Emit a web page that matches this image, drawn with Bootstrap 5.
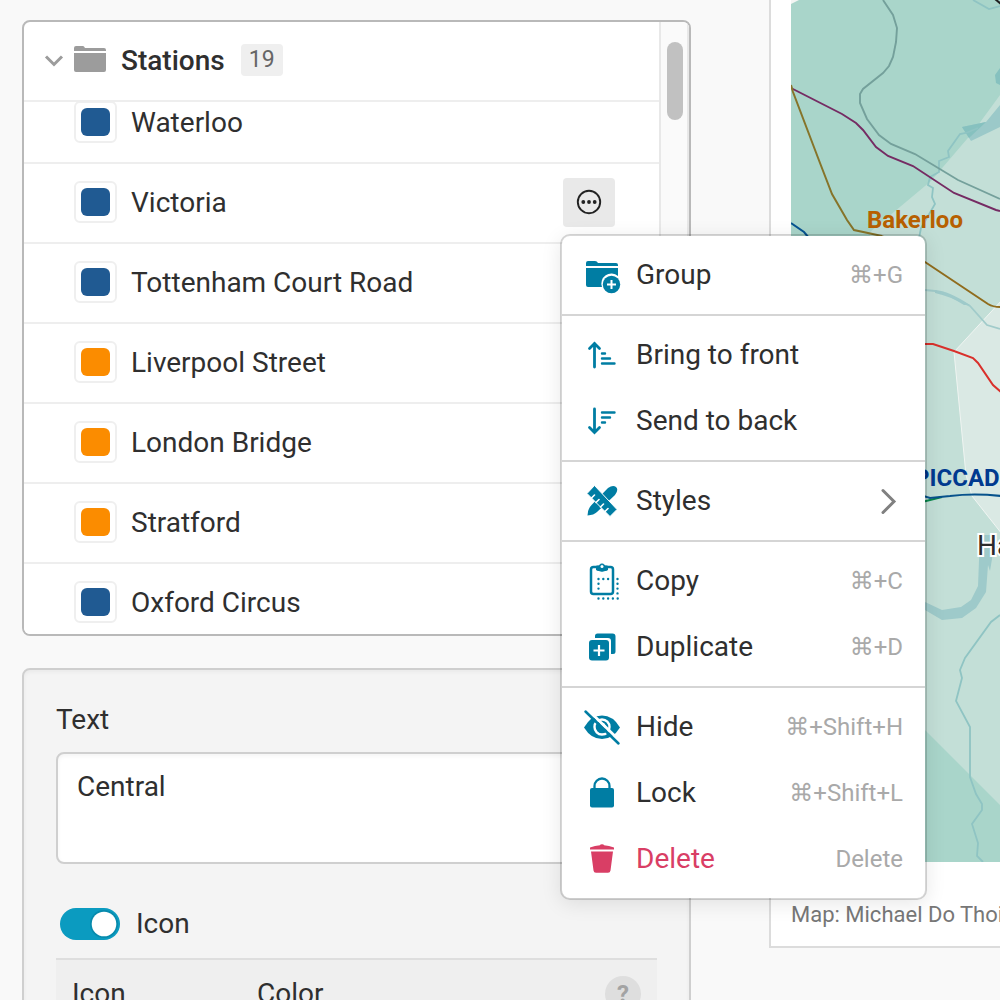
<!DOCTYPE html>
<html lang="en">
<head>
<meta charset="utf-8">
<meta name="viewport" content="width=device-width, initial-scale=1">
<title>Stations map editor</title>
<link href="https://cdn.jsdelivr.net/npm/bootstrap@5.3.0/dist/css/bootstrap.min.css" rel="stylesheet">
<style>
body{font-family:Roboto,"DejaVu Sans",sans-serif;font-size:28px;line-height:36px;color:#2f2f2f;background:#f9f9f9}
.editor{height:100vh;overflow:hidden}
.side{flex:0 0 691px;padding:20px 0 0 22px;gap:32px}
.panel{border:2px solid #b9b9b9;border-radius:8px;overflow:hidden;flex-shrink:0}
.layers{background:#fff;height:616px}
.layers-head{height:80px;border-bottom:2px solid #eee;padding:0 20px;flex-shrink:0}
.layers-head svg{flex-shrink:0}
.layers-title{font-weight:500;margin-left:13px}
.count{background:#efefef;color:#666;font-size:23px;font-weight:400;line-height:28px;padding:2px 8px;border-radius:4px;margin:0 0 2px 16px}
.layers-view{overflow:hidden;flex:1}
.layers-view ul{margin-top:-18px}
.layers .station{height:80px;border:0;border-bottom:2px solid #eee;border-radius:0;padding:0 44px 0 50px;color:inherit;background:#fff}
.swatch{width:43px;height:42px;border:2px solid #efefef;border-radius:6px;margin:0 14px 2px 0}
.swatch i{width:29px;height:28px;border-radius:6px;background:#205a92}
.swatch.orange i{background:#fb8c00}
.more{width:52px;height:49px;margin-bottom:2px;border-radius:4px;background:#e9e9e9;color:#222}
.track{width:30px;background:#fafafa;border-left:2px solid #e8e8e8;border-right:2px solid #e8e8e8;padding:20px 0 0 2px}
.thumb{width:16px;height:78px;border-radius:8px;background:#c1c1c1}
.props{background:#f4f4f4;border-color:#cfcfcf;padding:32px 32px 80px;box-shadow:inset 0 2px 4px #0000000c}
.props .form-label{margin:0 0 14px}
.props textarea{font-size:28px;line-height:36px;height:112px;padding:15px 19px;border:2px solid #cfcfcf;border-radius:8px;color:#2f2f2f;resize:none;box-shadow:inset 0 2px 4px #0000000c}
.switch-row{min-height:0;margin:42px 0 16px;padding:0 4px;gap:16px}
.switch-row .form-check-input{width:60px;height:32px;margin:0;border:0;float:none;background-size:32px 32px;background-color:#0b9bc0}
.switch-row .form-check-input:checked{background-color:#0b9bc0;background-image:url("data:image/svg+xml,%3csvg xmlns='http://www.w3.org/2000/svg' viewBox='0 0 32 32'%3e%3ccircle cx='16' cy='16' r='14' fill='%23078aac'/%3e%3ccircle cx='16' cy='16' r='12.3' fill='%23fff'/%3e%3c/svg%3e")}
.switch-row label{line-height:36px}
.icon-options{background:#efefef;border-top:2px solid #dedede;padding:16px}
.icon-options .col-icon{width:185px}
.help{width:36px;height:36px;border-radius:50%;background:#dedede;color:#a3a3a3;font-size:24px;font-weight:700;line-height:36px}
.map-card{margin:-2px -2px 0 78px;border:2px solid #dcdcdc;background:#fff;padding-left:20px;align-self:flex-start;flex:1;min-width:0}
.map-card svg{height:862px;width:100%;display:block}
.map-card p{font-size:22px;line-height:28px;color:#777;margin:0;padding:39px 0 17px;white-space:nowrap;overflow:hidden}
.ctx{left:560px;top:234px;width:367px;padding:0;border:2px solid #00000028;background-clip:padding-box;border-radius:10px;font-size:28px;color:#2f2f2f;box-shadow:0 4px 20px #00000018}
.ctx .menu-section{padding:6px 0;border-bottom:2px solid #d5d5d5}
.ctx .menu-section:last-child{border:0}
.ctx .dropdown-item{height:66px;padding:0 22px 0 20px;color:inherit;line-height:36px}
.ctx .dropdown-item svg{width:40px;height:40px;margin-right:14px;color:#007da3;flex-shrink:0}
.ctx .dropdown-item kbd{font:inherit;font-size:24px;color:#a9a9a9;background:none;padding:0;margin-left:auto}
.ctx .dropdown-item .chev{color:#808080;margin:0 -6px 0 auto}
.ctx .danger,.ctx .danger svg{color:#d93e65}
</style>
<script src="https://cdn.jsdelivr.net/npm/bootstrap@5.3.0/dist/js/bootstrap.bundle.min.js"></script>
</head>
<body>
<main class="editor d-flex position-relative">
<aside class="side d-flex flex-column">
  <section class="panel layers d-flex">
    <div class="d-flex flex-column flex-grow-1">
      <header class="layers-head d-flex align-items-center">
        <svg width="20" height="20" viewBox="0 0 20 20" fill="none" stroke="#9c9c9c" stroke-width="3"><path d="M2 5.500l8 8 8-8"/></svg>
        <svg class="ms-2" width="36" height="32" viewBox="0 0 36 32" fill="#9c9c9c"><path d="M2 6V3q0-2 2-2h7q1 0 2 2h19q2 0 2 2v1zM2 8h32v17q0 2-2 2H4q-2 0-2-2z"/></svg>
        <span class="layers-title">Stations</span><span class="count">19</span>
      </header>
      <div class="layers-view">
        <ul class="list-group">
          <li class="list-group-item station d-flex align-items-center"><span class="swatch d-flex align-items-center justify-content-center"><i></i></span>Waterloo</li>
          <li class="list-group-item station d-flex align-items-center"><span class="swatch d-flex align-items-center justify-content-center"><i></i></span>Victoria
            <button class="btn more ms-auto p-0 d-flex align-items-center justify-content-center" aria-label="More actions"><svg width="26" height="26" viewBox="0 0 26 26"><circle cx="13" cy="13" r="11.200" fill="none" stroke="currentColor" stroke-width="1.900"/><g fill="currentColor"><circle cx="7.300" cy="13" r="1.900"/><circle cx="13" cy="13" r="1.900"/><circle cx="18.700" cy="13" r="1.900"/></g></svg></button></li>
          <li class="list-group-item station d-flex align-items-center"><span class="swatch d-flex align-items-center justify-content-center"><i></i></span>Tottenham Court Road</li>
          <li class="list-group-item station d-flex align-items-center"><span class="swatch orange d-flex align-items-center justify-content-center"><i></i></span>Liverpool Street</li>
          <li class="list-group-item station d-flex align-items-center"><span class="swatch orange d-flex align-items-center justify-content-center"><i></i></span>London Bridge</li>
          <li class="list-group-item station d-flex align-items-center"><span class="swatch orange d-flex align-items-center justify-content-center"><i></i></span>Stratford</li>
          <li class="list-group-item station d-flex align-items-center"><span class="swatch d-flex align-items-center justify-content-center"><i></i></span>Oxford Circus</li>
        </ul>
      </div>
    </div>
    <div class="track d-flex justify-content-center"><div class="thumb"></div></div>
  </section>
  <section class="panel props">
    <label class="form-label d-block" for="label-text">Text</label>
    <textarea class="form-control" id="label-text">Central</textarea>
    <div class="form-check form-switch switch-row d-flex align-items-center">
      <input class="form-check-input" type="checkbox" role="switch" id="icon-on" checked><label for="icon-on">Icon</label>
    </div>
    <div class="icon-options d-flex align-items-center">
      <span class="col-icon">Icon</span><span>Color</span><button class="btn help p-0 ms-auto border-0">?</button>
    </div>
  </section>
</aside>
<section class="map-card">
  <svg viewBox="791 0 209 862" preserveAspectRatio="xMinYMin slice" role="img" aria-label="Map of London stations" font-family="Roboto" fill="none">
    <path fill="#a9d5ca" d="M791 0h209v862H791z"/>
    <path fill="#f3f5f3" d="M791 0h8l-8 4z"/>
    <path fill="#c3dfd7" d="M1000 95l-27 37-42 49-61 51v443l55 55 75 75z"/>
    <path fill="#dae9e4" stroke="#f0f5f2" d="M1002 300l-48 52 12 123 6 21 30 38z"/>
    <path fill="#9bc9c9" d="M962 127l24-5 14-17v22l-29 14z"/>
    <path fill="#86c1bf" d="M962 127l24-5-17 16zM995 75l5-7v17l-4-2z"/>
    <g stroke="#8fc4c3" stroke-width="1.800">
      <path d="M973 0l16 9 11-3M978 128l-12 5-6 1-12 17 1 6-10 4v11l-9 5-2 8 5 3-1 9 3 7-14 24-2 10"/>
      <path d="M925 290l10 1 15 5 20 10 17 19 13 4" stroke="#a1cbca"/>
      <path d="M1000 615l-9 7-26 36-5 12 2 8-6 23 14 26v50l6 17 6 10v6l-10 14 6 19-1 13 6 6"/>
    </g>
    <path fill="#9ecaca" d="M935 290q14 1 35 15l-6 0q-14-9-29-12zM980 535h16l-6 36-2-6-2 27-10 16-14 10-20 2-17-10v-8l17 8 19-3 10-7 7-14z"/>
    <path stroke="#74a09b" stroke-width="1.900" d="M883 0l10 15 4 13-1 14-3 15-4 9-6 7-20 16-3 5v9l7 16 12 16 12 9 24 10 43 26 42 19"/>
    <path stroke="#752b63" stroke-width="1.900" d="M791 88l51 26 14 9 7 7 13 17 12 9 25 10 41 27 42 17 4 1"/>
    <path stroke="#86742a" stroke-width="2" d="M791 85l2 7 27 71 12 31 15 26 7 10 28 6"/>
    <path stroke="#906c1d" stroke-width="2" d="M882 236l43 26 36 24 27 18q5 3 12 3"/>
    <path stroke="#075391" stroke-width="2" d="M791 223l13 9 5 6"/>
    <path stroke="#202020" stroke-width="2" d="M995-1l6 5"/>
    <path stroke="#d9302b" stroke-width="2" d="M920 344h13l21 7 19 7 5 5 15 22 8 7"/>
    <path stroke="#07884b" stroke-width="2" d="M922 502l20-5"/>
    <path stroke="#07528c" stroke-width="2.200" d="M920 495l10 3 20-2q24-3 51 0"/>
    <text x="867" y="228" fill="#b76000" font-size="24" font-weight="700">Bakerloo</text>
    <text x="914" y="486" fill="#003a8f" font-size="24" font-weight="700">PICCADILLY</text>
    <text x="977" y="555" fill="#2c2c2c" stroke="#fff" stroke-width="4" paint-order="stroke" font-size="28">Hammersmith</text>
  </svg>
  <p>Map: Michael Do Thoi</p>
</section>

<div class="dropdown-menu show ctx">
  <div class="menu-section">
    <button class="dropdown-item d-flex align-items-center"><svg viewBox="0 0 40 40" fill="currentColor"><path d="M4 11V8q0-2 2-2h7q2 0 3 2h18q2 0 2 2v1zM4 13h32v8a10 10 0 0 0-16 11H6q-2 0-2-2z"/><circle cx="29.500" cy="29.500" r="8.700"/><path d="M29.500 25v9M25 29.500h9" stroke="#fff" stroke-width="2"/></svg>Group<kbd>⌘+G</kbd></button>
  </div>
  <div class="menu-section">
    <button class="dropdown-item d-flex align-items-center"><svg viewBox="0 0 40 40" fill="none" stroke="currentColor" stroke-width="2.800" stroke-linecap="round"><path d="M12.500 32V8.500M7.500 13.500l5-5 5 5"/><path stroke-width="2.400" d="M20 18.500h3M20 23.500h8M20 28.500h12.500"/></svg>Bring to front</button>
    <button class="dropdown-item d-flex align-items-center"><svg viewBox="0 0 40 40" fill="none" stroke="currentColor" stroke-width="2.800" stroke-linecap="round"><path d="M12.500 8v23.500M7.500 26.500l5 5 5-5"/><path stroke-width="2.400" d="M20 11.500h12.500M20 16.500h8M20 21.500h3"/></svg>Send to back</button>
  </div>
  <div class="menu-section">
    <button class="dropdown-item d-flex align-items-center"><svg viewBox="0 0 40 40" fill="currentColor"><path d="M26 7q5-3.500 8-1t-1 8L15 31q-3 3-9.500 3.500 0-6.500 4-10.500z"/><path stroke="#fff" stroke-width="1" d="M12.500 4.500L35 28.500 28 35.500 5 12.500z"/><path stroke="#fff" stroke-width="1.600" stroke-linecap="round" d="M9.500 17l3-3M14 21.500l3-3M18.500 26l3-3M23 30.500l3-3"/></svg>Styles<svg class="chev" viewBox="0 0 40 40" fill="none" stroke="currentColor" stroke-width="3" stroke-linecap="round"><path d="M14 9.500L25 20.500 14 31.500"/></svg></button>
  </div>
  <div class="menu-section">
    <button class="dropdown-item d-flex align-items-center"><svg viewBox="0 0 40 40" fill="none" stroke="currentColor"><rect x="9" y="6" width="22" height="27" rx="2.500" stroke-width="2.500"/><path d="M14.500 9V5h2.500a3.200 3.200 0 0 1 6 0h2.500v4q-5.500 2.500-11 0z" fill="currentColor" stroke="currentColor"/><circle cx="20" cy="5.500" r="1.500" fill="#fff" stroke="none"/><path stroke-width="2.400" stroke-linecap="round" stroke-dasharray="0 4.800" d="M16.500 18h10M16.500 22.800v8M35.500 18v18M16.500 37.500h20"/></svg>Copy<kbd>⌘+C</kbd></button>
    <button class="dropdown-item d-flex align-items-center"><svg viewBox="0 0 40 40" fill="currentColor"><path d="M13 11V9q0-2.500 2.500-2.500h15q3 0 3 3v15q0 2.500-2.500 2.500h-2V14q0-3-3-3z"/><rect x="7" y="13" width="20" height="20.500" rx="3"/><path d="M17 18v11M11.500 23.500h11" stroke="#fff" stroke-width="2.200"/></svg>Duplicate<kbd>⌘+D</kbd></button>
  </div>
  <div class="menu-section">
    <button class="dropdown-item d-flex align-items-center"><svg viewBox="0 0 40 40"><path fill="currentColor" d="M2 20.500q7-12 18-12t18 12q-7 11.500-18 11.500T2 20.500z"/><circle cx="20" cy="20" r="7.500" fill="none" stroke="#fff" stroke-width="2.400"/><path d="M18 17q1-2 4-1l2 3-1 3z" fill="#fff"/><path d="M6 3l33 32" stroke="#fff" stroke-width="3"/><path d="M3.500 4.500l33 32" stroke="currentColor" stroke-width="2.500" stroke-linecap="round"/></svg>Hide<kbd>⌘+Shift+H</kbd></button>
    <button class="dropdown-item d-flex align-items-center"><svg viewBox="0 0 40 40"><rect x="8" y="15" width="24" height="19.500" rx="2" fill="currentColor"/><path d="M12.500 16v-3a7.500 7.500 0 0 1 15 0v3" fill="none" stroke="currentColor" stroke-width="2.300"/></svg>Lock<kbd>⌘+Shift+L</kbd></button>
    <button class="dropdown-item d-flex align-items-center danger"><svg viewBox="0 0 40 40" fill="currentColor"><path d="M8 10.500V8.500q5-2 10-2.200 0-1 2-1t2 1q5 .2 10 2.200v2zM9 12.500h22l-2.500 19q-.3 2.200-2.500 2.200H14q-2.200 0-2.500-2.200z"/></svg>Delete<kbd>Delete</kbd></button>
  </div>
</div>
</main>
</body>
</html>
